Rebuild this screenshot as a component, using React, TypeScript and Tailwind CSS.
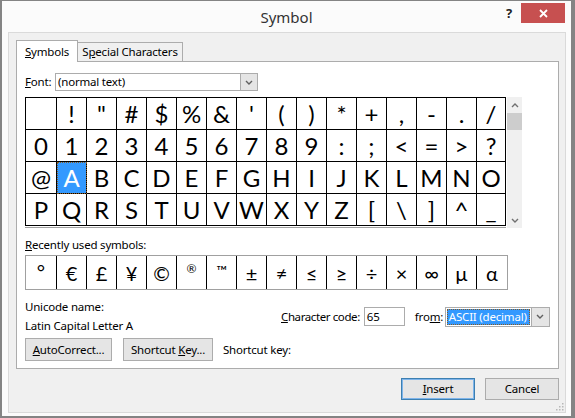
import React from 'react';

const gridRows: string[][] = [
  [' ', '!', '"', '#', '$', '%', '&', "'", '(', ')', '*', '+', ',', '-', '.', '/'],
  ['0', '1', '2', '3', '4', '5', '6', '7', '8', '9', ':', ';', '<', '=', '>', '?'],
  ['@', 'A', 'B', 'C', 'D', 'E', 'F', 'G', 'H', 'I', 'J', 'K', 'L', 'M', 'N', 'O'],
  ['P', 'Q', 'R', 'S', 'T', 'U', 'V', 'W', 'X', 'Y', 'Z', '[', '\\', ']', '^', '_'],
];

const recent = ['°', '€', '£', '¥', '©', '®', '™', '±', '≠', '≤', '≥', '÷', '×', '∞', 'µ', 'α'];

function Chevron({ dir = 'down', className = '' }: { dir?: 'up' | 'down'; className?: string }) {
  return (
    <svg width="8" height="5" viewBox="0 0 8 5" className={className}>
      {dir === 'down' ? (
        <polyline points="1,1 4,4 7,1" fill="none" stroke="currentColor" strokeWidth="1.4" />
      ) : (
        <polyline points="1,4 4,1 7,4" fill="none" stroke="currentColor" strokeWidth="1.4" />
      )}
    </svg>
  );
}

function Btn({ children, w, primary = false }: { children: React.ReactNode; w: string; primary?: boolean }) {
  return (
    <div
      className={`${w} flex items-center justify-center bg-[#e5e5e5] border whitespace-nowrap ${
        primary ? 'border-[#3c7fb1] outline outline-1 outline-[#7eb4ea] -outline-offset-2' : 'border-[#acacac]'
      }`}
    >
      {children}
    </div>
  );
}

export default function App() {
  return (
    <div className="w-[575px] h-[418px] bg-[#fbfbfb] border-l-2 border-t border-r-4 border-b-2 border-[#848484] flex flex-col text-[11.5px] tracking-[-0.2px] text-black font-['Noto_Sans',sans-serif] leading-[16px] whitespace-nowrap select-none">
      {/* title bar */}
      <div className="h-[31px] grid grid-cols-[1fr_auto_1fr]">
        <div />
        <div className="pt-[6px] text-[15px] tracking-normal text-[#333] leading-[20px]">Symbol</div>
        <div className="flex justify-end items-start pt-[2px] pr-[6px]">
          <div className="w-[24px] h-[20px] flex items-center justify-center font-bold text-[13px] text-[#222]">?</div>
          <div className="w-[44px] h-[20px] bg-[#c75050] flex items-center justify-center">
            <svg width="9" height="9" viewBox="0 0 9 9">
              <path d="M1 1 L8 8 M8 1 L1 8" stroke="white" strokeWidth="1.8" />
            </svg>
          </div>
        </div>
      </div>

      {/* client */}
      <div className="flex-1 ml-[6px] mr-[5px] mb-[3px] border border-[#dadada] bg-[#f0f0f0] pl-[7px] pt-[7px] flex flex-col">
        {/* tabs */}
        <div className="flex items-end">
          <div className="relative z-10 h-[22px] -mb-px w-[62px] bg-white border border-b-0 border-[#acacac] flex items-center justify-center">
            <span>
              <span className="underline">S</span>ymbols
            </span>
          </div>
          <div className="h-[19px] w-[106px] -ml-px bg-[#f0f0f0] border border-b-0 border-[#acacac] flex items-center justify-center">
            <span>
              S<span className="underline">p</span>ecial Characters
            </span>
          </div>
        </div>

        {/* panel */}
        <div className="w-[543px] h-[308px] bg-white border border-[#acacac] pl-[8px] flex flex-col">
          {/* font row */}
          <div className="mt-[11px] h-[18px] flex items-center">
            <div className="w-[30px]">
              <span className="underline">F</span>ont:
            </div>
            <div className="w-[203px] h-[18px] border border-[#acacac] flex">
              <div className="flex-1 pl-[2px] leading-[16px]">(normal text)</div>
              <div className="w-[17px] bg-[#e5e5e5] border-l border-[#acacac] flex items-center justify-center text-[#606060]">
                <Chevron />
              </div>
            </div>
          </div>

          {/* symbol grid */}
          <div className="mt-[6px] flex">
            <div className="flex flex-col">
              <div className="border-l border-t border-black font-['Lato',sans-serif] text-[24px] tracking-normal">
                {gridRows.map((row, ri) => (
                  <div key={ri} className="grid grid-cols-[31px_repeat(14,30px)_29px] h-[32px]">
                    {row.map((ch, ci) => {
                      const sel = ri === 2 && ci === 1;
                      return (
                        <div
                          key={ci}
                          className={`border-r border-b border-black flex items-center justify-center ${
                            sel ? 'bg-[#3399ff] text-white outline-dotted outline-1 outline-[#8a5a20] -outline-offset-1' : ''
                          }`}
                        >
                          {ch}
                        </div>
                      );
                    })}
                  </div>
                ))}
              </div>
              <div className="mt-px h-px bg-[#a0a0a0]" />
            </div>
            <div className="ml-px w-[15px] h-[131px] bg-[#f0f0f0] flex flex-col items-center">
              <div className="h-[16px] flex items-center justify-center text-[#707070]">
                <Chevron dir="up" />
              </div>
              <div className="w-[15px] h-[17px] bg-[#cdcdcd]" />
              <div className="flex-1" />
              <div className="h-[16px] flex items-center justify-center text-[#707070]">
                <Chevron />
              </div>
            </div>
          </div>

          {/* recently used */}
          <div className="mt-[9px]">
            <span className="underline">R</span>ecently used symbols:
          </div>
          <div className="mt-[2px] w-[483px] h-[35px] border border-[#a0a0a0] grid grid-cols-[31px_repeat(14,30px)_30px] font-['Lato',sans-serif] text-[20px] tracking-normal">
            {recent.map((ch, i) => (
              <div
                key={i}
                className={`flex items-center justify-center ${i < 15 ? 'border-r border-black' : ''}`}
              >
                {ch === '®' ? (
                  <span className="text-[12px] -translate-y-[4px]">®</span>
                ) : ch === '™' ? (
                  <span className="text-[14px] -translate-y-[2px]">™</span>
                ) : ch === '°' ? (
                  <span className="-translate-y-[2px]">°</span>
                ) : (
                  ch
                )}
              </div>
            ))}
          </div>

          {/* unicode name + char code */}
          <div className="mt-[9px] flex items-center">
            <div className="flex flex-col gap-[3px] w-[256px]">
              <div>Unicode name:</div>
              <div>Latin Capital Letter A</div>
            </div>
            <div className="flex items-center">
              <div className="tracking-[-0.4px]">
                <span className="underline">C</span>haracter code:
              </div>
              <div className="ml-[4px] w-[41px] h-[19px] border border-[#acacac] pl-[2px] leading-[17px]">65</div>
              <div className="ml-[10px] w-[30px]">
                fro<span className="underline">m</span>:
              </div>
              <div className="w-[105px] h-[20px] border border-[#acacac] flex">
                <div className="flex-1 p-px">
                  <div className="h-full bg-[#3399ff] text-white pl-[2px] leading-[16px] outline-dotted outline-1 outline-[#8a5a20] -outline-offset-1">
                    ASCII (decimal)
                  </div>
                </div>
                <div className="w-[18px] bg-[#e5e5e5] border-l border-[#acacac] flex items-center justify-center text-[#606060]">
                  <Chevron />
                </div>
              </div>
            </div>
          </div>

          {/* buttons */}
          <div className="mt-[4px] h-[23px] flex items-stretch">
            <Btn w="w-[87px]">
              <span>
                <span className="underline">A</span>utoCorrect...
              </span>
            </Btn>
            <div className="ml-[11px] flex">
              <Btn w="w-[90px]">
                <span>
                  Shortcut <span className="underline">K</span>ey...
                </span>
              </Btn>
            </div>
            <div className="ml-[10px] flex items-center">Shortcut key:</div>
          </div>
        </div>

        {/* bottom buttons */}
        <div className="mt-[9px] w-[543px] flex justify-end gap-[10px]">
          <div className="h-[22px] flex">
            <Btn w="w-[74px]" primary>
              <span>
                <span className="underline">I</span>nsert
              </span>
            </Btn>
          </div>
          <div className="h-[22px] flex">
            <Btn w="w-[74px]">Cancel</Btn>
          </div>
        </div>
        <div className="flex-1 flex justify-end items-end pr-px pb-px">
          <svg width="8" height="8" viewBox="0 0 8 8">
            <g fill="#b8b8b8">
              <rect x="6" y="0" width="1.5" height="1.5" />
              <rect x="3" y="3" width="1.5" height="1.5" />
              <rect x="6" y="3" width="1.5" height="1.5" />
              <rect x="0" y="6" width="1.5" height="1.5" />
              <rect x="3" y="6" width="1.5" height="1.5" />
              <rect x="6" y="6" width="1.5" height="1.5" />
            </g>
          </svg>
        </div>
      </div>
    </div>
  );
}
